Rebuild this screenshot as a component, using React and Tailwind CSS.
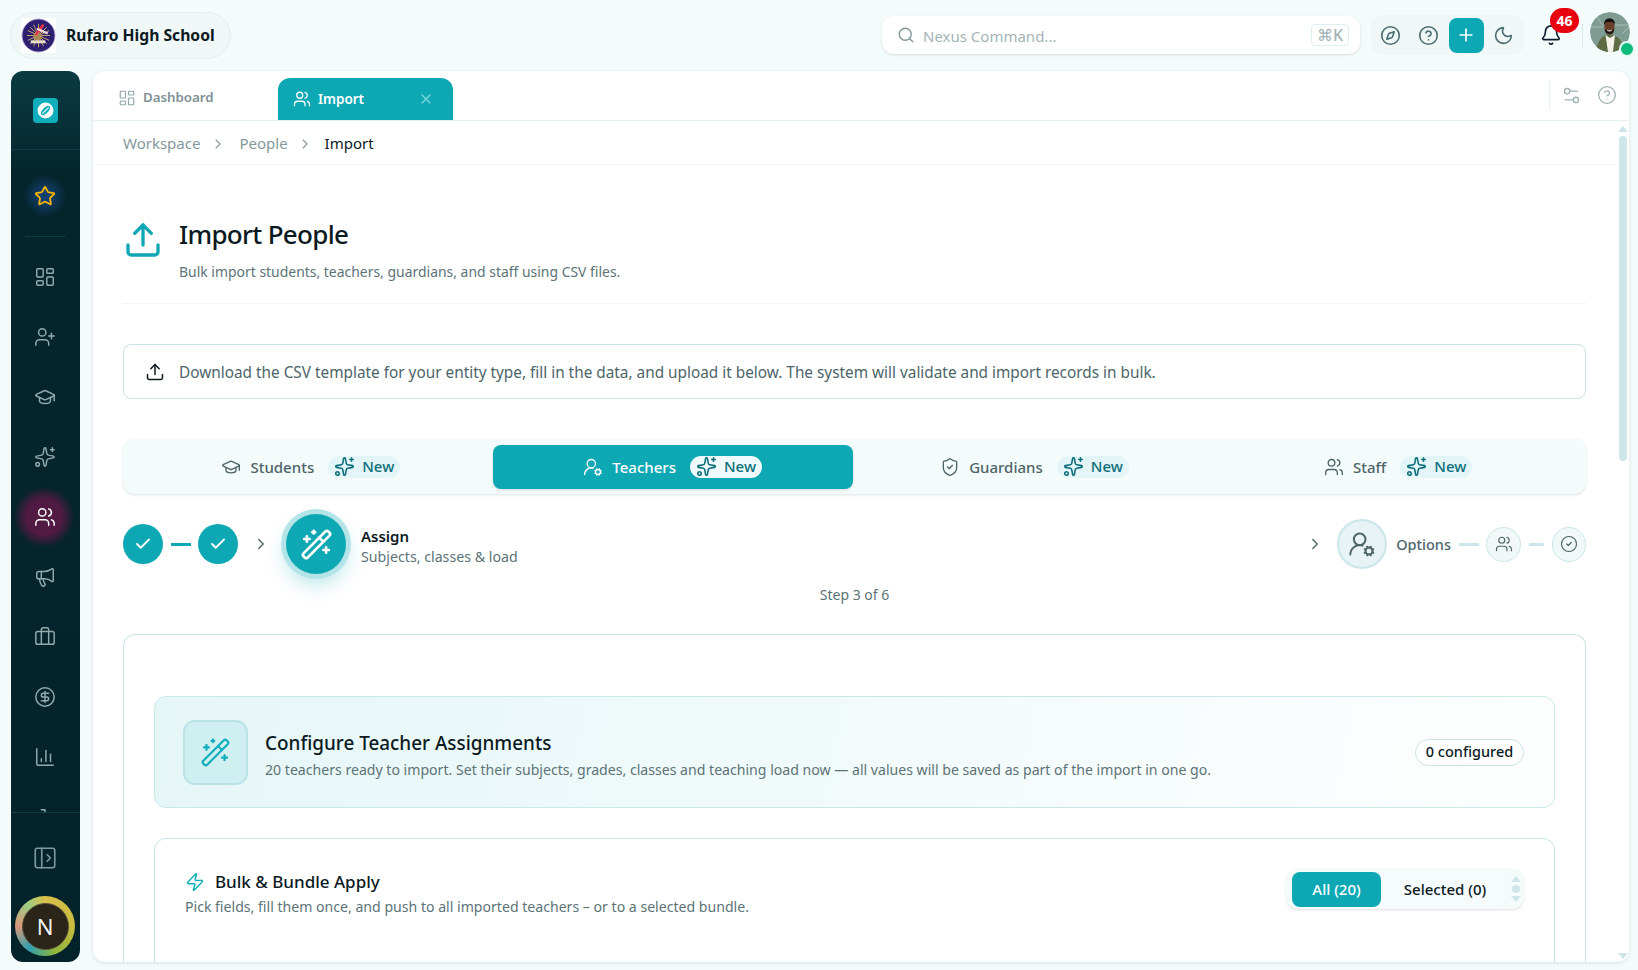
import React from "react";
import {
  LayoutDashboard, Users, X, Star, UserPlus, GraduationCap, Sparkles, Megaphone, Briefcase,
  CircleDollarSign, ChartColumn, PanelLeftOpen, Compass, CircleHelp, Plus, Moon, Bell, Search,
  Upload, Settings2, UserRoundCog, ShieldCheck, WandSparkles, Check, CircleCheck, ChevronRight,
  Zap, Bot,
} from "lucide-react";

function SchoolLogo() {
  return (
    <svg viewBox="0 0 36 36" className="w-[35px] h-[35px] bg-white shrink-0">
      <circle cx="18" cy="18" r="17" fill="#2c1f70" stroke="#b9a9d6" strokeWidth="1" />
      <g stroke="#d8b46a" strokeWidth="0.9">
        <path d="M18 6v24M6 18h24M9.5 9.5l17 17M26.5 9.5l-17 17M13 7l10 22M23 7L13 29M7 13l22 10M29 13L7 23" />
      </g>
      <circle cx="17" cy="19" r="4.5" fill="#a88a5a" />
      <path d="M22 6l2 2-8 10-2-1z" fill="#e8304a" />
      <path d="M17 10l11 5-1 2-11-5z" fill="#f2d9d9" />
      <path d="M10 23h15v3H10z" fill="#e9dfc6" />
    </svg>
  );
}

function Avatar() {
  return (
    <svg viewBox="0 0 40 40" className="w-10 h-10 rounded-full block">
      <circle cx="20" cy="20" r="20" fill="#7f9c92" />
      <path d="M0 15h13M25 13h15M7 5l6 9M32 22l7-7" stroke="#c4d8d0" strokeWidth="0.6" fill="none" />
      <path d="M6 40c1-10 5-15 10-17h7c6 2 10 7 11 17z" fill="#5f6b42" />
      <path d="M15.500 23l2.500 17h5l2-17-5 3z" fill="#f4f1ea" />
      <ellipse cx="19.500" cy="14.500" rx="5" ry="7" fill="#6a3f28" />
      <path d="M14 13c0-5 2.500-6.500 5.500-6.500s5.500 1.500 5.500 6.500c-1-2.500-2.500-3-5.500-3s-4.500.5-5.500 3z" fill="#17100d" />
      <path d="M14.500 16c.5 5 2 6.500 5 6.500s4.500-1.500 5-6.500c-.8 2-2 2.300-5 2.300s-4.200-.3-5-2.300z" fill="#2a1a12" />
      <path d="M16.800 17.500c1.500 1.400 4 1.400 5.400 0-.5 2.500-4.900 2.500-5.400 0z" fill="#fff" />
    </svg>
  );
}

function NavItem({ icon: Icon, active }) {
  return (
    <div className="relative h-[60px] flex items-center justify-center shrink-0 pr-[1px]">
      {active && (
        <div className="absolute left-[3px] top-0 w-[60px] h-[60px] rounded-full bg-[radial-gradient(circle,#501a43_42%,rgba(80,26,67,0)_72%)]" />
      )}
      <Icon className={active ? "relative w-[22px] h-[22px] text-white" : "relative w-[22px] h-[22px] text-[#93aaad]"} strokeWidth={1.6} />
    </div>
  );
}

function Sidebar() {
  return (
    <aside className="w-[69px] h-[891px] shrink-0 rounded-xl flex flex-col bg-[linear-gradient(180deg,#0a3a42_0%,#05252d_12%,#04222a_100%)] overflow-hidden">
      <div className="h-[79px] shrink-0 flex items-center justify-center border-b border-[#0d3c44] pr-[1px]">
        <div className="w-[25px] h-[25px] rounded bg-[#10aebb] flex items-center justify-center">
          <svg viewBox="0 0 24 24" className="w-[19px] h-[19px]">
            <circle cx="12" cy="12" r="10" fill="#fff" />
            <ellipse cx="12" cy="12" rx="7.500" ry="3.600" fill="#10aebb" transform="rotate(-45 12 12)" />
            <path d="M8 16L16 8" stroke="#fff" strokeWidth="1.300" />
          </svg>
        </div>
      </div>
      <div className="h-[86px] shrink-0 flex items-center justify-center pt-[6px] pr-[1px]">
        <div className="w-11 h-11 rounded-full flex items-center justify-center bg-[radial-gradient(circle,#123f6e_15%,rgba(18,63,110,0)_68%)]">
          <Star className="w-[22px] h-[22px] text-[#f6b400]" strokeWidth={2} />
        </div>
      </div>
      <div className="mx-[14px] h-px shrink-0 bg-[#0d3c44]" />
      <div className="flex-1 min-h-0 overflow-hidden pt-[10px]">
        <NavItem icon={LayoutDashboard} />
        <NavItem icon={UserPlus} />
        <NavItem icon={GraduationCap} />
        <NavItem icon={Sparkles} />
        <NavItem icon={Users} active />
        <NavItem icon={Megaphone} />
        <NavItem icon={Briefcase} />
        <NavItem icon={CircleDollarSign} />
        <NavItem icon={ChartColumn} />
        <NavItem icon={Bot} />
      </div>
      <div className="h-[150px] shrink-0 border-t border-[#0d3c44] flex flex-col items-center pr-[1px]">
        <PanelLeftOpen className="mt-[32px] w-[26px] h-[26px] text-[#7d9a9e]" strokeWidth={1.5} />
        <div className="mt-[25px] w-[60px] h-[60px] rounded-full flex items-center justify-center bg-[conic-gradient(#d8c04a_0deg,#c9bb3f_90deg,#8fb53c_160deg,#2f9fb0_215deg,#d99878_270deg,#9ccc82_320deg,#d8c04a_360deg)]">
          <div className="w-[47px] h-[47px] rounded-full bg-[#2a2518] border border-[#55503c] flex items-center justify-center text-[#f2f2f2] text-[22px]">N</div>
        </div>
      </div>
    </aside>
  );
}

function Header() {
  return (
    <header className="h-[71px] shrink-0 flex items-start pl-[10px]">
      <div className="mt-[12px] w-[221px] h-[47px] rounded-full bg-[#eff7f7] border border-[#e1eff0] flex items-center pl-[10px] gap-[10px]">
        <SchoolLogo />
        <span className="text-[15.7px] font-bold text-[#0b1a1f] whitespace-nowrap">Rufaro High School</span>
      </div>
      <div className="ml-[651px] mt-[16px] w-[478px] h-[38px] rounded-xl bg-white shadow-sm flex items-center pl-[15px] pr-[11px]">
        <Search className="w-[18px] h-[18px] text-[#7f9598]" strokeWidth={1.8} />
        <span className="ml-[8px] mt-[2px] text-[15px] text-[#a3b4b7]">Nexus Command...</span>
        <span className="ml-auto w-[38px] h-[22px] rounded border border-[#dff0f1] flex items-center justify-center text-[16px] text-[#a3b4b7] font-medium">⌘K</span>
      </div>
      <div className="ml-[11px] mt-[15px] w-[153px] h-[40px] rounded-xl bg-[#eff7f7] flex items-center pl-[9px] pr-[10px] justify-between">
        <Compass className="w-[21px] h-[21px] text-[#4a6b70]" strokeWidth={1.8} />
        <CircleHelp className="ml-[8px] w-[21px] h-[21px] text-[#4a6b70]" strokeWidth={1.8} />
        <div className="w-[35px] h-[35px] rounded-lg bg-[#0ea8b5] flex items-center justify-center">
          <Plus className="w-[20px] h-[20px] text-white" strokeWidth={2} />
        </div>
        <Moon className="w-[21px] h-[21px] text-[#4a6b70]" strokeWidth={1.8} />
      </div>
      <div className="relative ml-[16px] mt-[24px] w-[22px] h-[22px]">
        <Bell className="w-[22px] h-[22px] text-[#0b1a2b]" strokeWidth={1.8} />
        <span className="absolute left-[10px] top-[-16px] w-[29px] h-[25px] rounded-full bg-[#e8000f] text-white text-[14px] font-bold flex items-center justify-center">46</span>
      </div>
      <div className="ml-[20px] mt-[24px] w-px h-[24px] bg-[#dcecee]" />
      <div className="relative ml-[7px] mt-[12px] w-10 h-10">
        <Avatar />
        <span className="absolute left-[29px] top-[29px] w-[16px] h-[16px] rounded-full bg-[#0dbb7c] border-2 border-[#e6faf4]" />
      </div>
    </header>
  );
}

function TabBar() {
  return (
    <div className="h-[50px] shrink-0 border-b border-[#e4f2f3] flex items-end">
      <div className="w-[185px] h-[42px] pl-[25px] flex items-center gap-[7px] pb-[3px]">
        <LayoutDashboard className="w-[18px] h-[18px] text-[#93a6a9]" strokeWidth={1.6} />
        <span className="text-[13.3px] font-semibold text-[#7d9194]">Dashboard</span>
      </div>
      <div className="w-[175px] h-[42px] rounded-t-xl bg-[#0ea8b5] flex items-center pl-[15px] pr-[19px]">
        <Users className="w-[18px] h-[18px] text-white" strokeWidth={1.7} />
        <span className="ml-[7px] text-[13.5px] font-semibold text-white">Import</span>
        <X className="ml-auto w-[16px] h-[16px] text-[#7ed3da]" strokeWidth={2} />
      </div>
      <div className="ml-auto h-[30px] mb-[10px] w-[80px] border-l border-[#e4f2f3] flex items-center pl-[11px] gap-[15px]">
        <Settings2 className="w-[21px] h-[21px] text-[#a0b2b5]" strokeWidth={1.6} />
        <CircleHelp className="w-[20px] h-[20px] text-[#a0b2b5]" strokeWidth={1.6} />
      </div>
    </div>
  );
}

function Breadcrumb() {
  return (
    <div className="h-[44px] pt-[2px] border-b border-[#eff7f8] flex items-center pl-[30px] text-[15px] text-[#84989b] shrink-0">
      <span>Workspace</span>
      <ChevronRight className="mx-[10px] w-[16px] h-[16px] text-[#84989b]" strokeWidth={1.6} />
      <span className="ml-[3px]">People</span>
      <ChevronRight className="mx-[9px] w-[16px] h-[16px] text-[#84989b]" strokeWidth={1.6} />
      <span className="ml-[3px] text-[#0b1a1f]">Import</span>
    </div>
  );
}

function NewPill({ active }) {
  return (
    <span className={active ? "ml-[14px] h-[22px] pl-[6px] pr-[6px] rounded-full bg-[#eefafb] text-[#0d6f7a] flex items-center gap-[7px] text-[15px] font-medium" : "ml-[14px] h-[22px] pl-[6px] pr-[6px] rounded-full bg-[#e3f5f7] text-[#0d6f7a] flex items-center gap-[7px] text-[15px] font-medium"}>
      <Sparkles className="w-[21px] h-[21px]" strokeWidth={1.8} />
      New
    </span>
  );
}

function EntityTab({ icon: Icon, label, active }) {
  return (
    <div className={active ? "w-[360px] shrink-0 h-[44px] rounded-lg bg-[#0ea8b5] text-white flex items-center justify-center shadow-sm" : "flex-1 h-[44px] text-[#4d6569] flex items-center justify-center"}>
      <Icon className="w-[20px] h-[20px] mr-[9px]" strokeWidth={1.6} />
      <span className="text-[15px] font-medium mt-[1px]">{label}</span>
      <NewPill active={active} />
    </div>
  );
}

function Stepper() {
  return (
    <div className="mt-[15px] h-[70px] flex items-center">
      <div className="w-10 h-10 rounded-full bg-[#0ea8b5] flex items-center justify-center">
        <Check className="w-[18px] h-[18px] text-white" strokeWidth={2.4} />
      </div>
      <div className="ml-[8px] mr-[7px] w-[20px] h-[3px] bg-[#0ea8b5]" />
      <div className="w-10 h-10 rounded-full bg-[#0ea8b5] flex items-center justify-center">
        <Check className="w-[18px] h-[18px] text-white" strokeWidth={2.4} />
      </div>
      <ChevronRight className="ml-[14px] w-[18px] h-[18px] text-[#4d6569]" strokeWidth={1.8} />
      <div className="ml-[16px] w-[60px] h-[60px] rounded-full bg-[#0ea8b5] flex items-center justify-center shadow-[0_0_0_5px_#b5e4e8,0_10px_20px_rgba(14,168,181,0.3)]">
        <WandSparkles className="w-[33px] h-[33px] text-white" strokeWidth={1.9} />
      </div>
      <div className="ml-[15px] mt-[5px]">
        <div className="text-[15px] font-semibold text-[#0b1a1f] leading-[20px]">Assign</div>
        <div className="text-[14.2px] text-[#5c7377] leading-[21px]">Subjects, classes &amp; load</div>
      </div>
      <ChevronRight className="ml-auto w-[18px] h-[18px] text-[#4d6569]" strokeWidth={1.8} />
      <div className="ml-[13px] w-[50px] h-[50px] rounded-full bg-[#e7f3f4] border-2 border-[#cae6ea] flex items-center justify-center">
        <UserRoundCog className="w-[28px] h-[28px] text-[#4d6569]" strokeWidth={1.7} />
      </div>
      <span className="ml-[9px] mt-[1px] text-[14.5px] font-medium text-[#4d6569]">Options</span>
      <div className="ml-[8px] w-[20px] h-[3px] bg-[#cae6ea]" />
      <div className="ml-[7px] w-[35px] h-[35px] rounded-full bg-[#f0f8f8] border border-[#cae6ea] flex items-center justify-center">
        <Users className="w-[18px] h-[18px] text-[#4d6569]" strokeWidth={1.6} />
      </div>
      <div className="ml-[8px] w-[15px] h-[3px] bg-[#cae6ea]" />
      <div className="ml-[8px] w-[34px] h-[35px] rounded-full bg-[#f0f8f8] border border-[#cae6ea] flex items-center justify-center">
        <CircleCheck className="w-[18px] h-[18px] text-[#4d6569]" strokeWidth={1.6} />
      </div>
    </div>
  );
}

function ConfigureBox() {
  return (
    <div className="h-[112px] rounded-xl border border-[#c8e8ea] bg-[linear-gradient(100deg,#e5f6f7_0%,#fdfefe_95%)] flex items-center pl-[28px] pr-[30px] shrink-0">
      <div className="w-[65px] h-[65px] rounded-xl bg-[#d0eff1] border-2 border-[#b8e4e8] flex items-center justify-center">
        <WandSparkles className="w-[31px] h-[31px] text-[#10aebb]" strokeWidth={1.7} />
      </div>
      <div className="ml-[17px] mt-[8px]">
        <div className="text-[18.9px] font-medium text-[#0b1a1f] leading-[27px]">Configure Teacher Assignments</div>
        <div className="text-[14.1px] text-[#5c7377] leading-[25px]">20 teachers ready to import. Set their subjects, grades, classes and teaching load now — all values will be saved as part of the import in one go.</div>
      </div>
      <span className="ml-auto h-[27px] w-[109px] rounded-full bg-white border border-[#c8e3e6] flex items-center justify-center text-[14.5px] font-medium text-[#0b1a1f]">0 configured</span>
    </div>
  );
}

function BulkCard() {
  return (
    <div className="mt-[30px] h-[200px] shrink-0 rounded-t-xl border border-[#c8e3e6] pl-[30px] pr-[30px] flex items-start">
      <div className="mt-[30px]">
        <div className="flex items-center h-[26px]">
          <Zap className="w-[20px] h-[20px] text-[#10aebb]" strokeWidth={1.7} />
          <span className="ml-[10px] text-[17px] font-medium text-[#0b1a1f]">Bulk &amp; Bundle Apply</span>
        </div>
        <div className="mt-[1px] text-[14.1px] text-[#5c7377]">Pick fields, fill them once, and push to all imported teachers – or to a selected bundle.</div>
      </div>
      <div className="ml-auto mt-[30px] w-[238px] h-[40px] rounded-xl bg-[#f4fbfb] shadow-sm flex items-center pl-[6px]">
        <div className="w-[89px] h-[35px] rounded-lg bg-[#0ea8b5] text-white text-[15px] font-medium flex items-center justify-center">All (20)</div>
        <div className="w-[124px] h-[35px] pl-[4px] rounded-r-lg bg-[#f6fbfd] text-[#0b1a1f] text-[15px] font-medium flex items-center justify-center">Selected (0)</div>
        <div className="ml-auto w-[17px] flex flex-col items-center gap-[3px]">
          <span className="w-0 h-0 border-x-[5px] border-x-transparent border-b-[6px] border-b-[#cfe6e9]" />
          <span className="w-[8px] h-[8px] rounded-full bg-[#cfe6e9]" />
          <span className="w-0 h-0 border-x-[5px] border-x-transparent border-t-[6px] border-t-[#cfe6e9]" />
        </div>
      </div>
    </div>
  );
}

function ScrollBar() {
  return (
    <div className="w-[13px] shrink-0 flex flex-col items-center pt-[5px] pb-[3px]">
      <span className="w-0 h-0 border-x-[5px] border-x-transparent border-b-[6px] border-b-[#cfe6e9]" />
      <span className="mt-[4px] w-[8px] h-[325px] rounded bg-[#cfe6e9]" />
      <span className="mt-auto w-0 h-0 border-x-[5px] border-x-transparent border-t-[6px] border-t-[#cfe6e9]" />
    </div>
  );
}

export default function App() {
  return (
    <div className="w-[1638px] h-[970px] overflow-hidden bg-[#f4fbfb] flex flex-col font-['Noto_Sans',sans-serif]">
      <Header />
      <div className="flex pl-[11px]">
        <Sidebar />
        <main className="ml-[13px] w-[1536px] h-[891px] rounded-xl bg-white shadow-[0_1px_4px_rgba(0,60,70,0.12)] flex flex-col overflow-hidden">
          <TabBar />
          <div className="flex flex-1 min-h-0">
            <div className="flex-1 min-w-0 overflow-hidden flex flex-col">
              <Breadcrumb />
              <div className="pl-[30px] pr-[30px] flex flex-col flex-1 min-h-0">
                <div className="mt-[55px] pb-[21px] border-b border-[#eff7f8] flex items-start">
                  <Upload className="w-10 h-10 text-[#10a7b4] shrink-0" strokeWidth={2} />
                  <div className="ml-[16px] -mt-[2px]">
                    <h1 className="text-[26px] font-medium text-[#0b1a1f] leading-[32px] tracking-[-0.7px]">Import People</h1>
                    <p className="mt-[12px] text-[13.95px] text-[#5c7377] leading-[20px]">Bulk import students, teachers, guardians, and staff using CSV files.</p>
                  </div>
                </div>
                <div className="mt-[40px] h-[55px] shrink-0 rounded-lg border border-[#c8e3e6] flex items-center pl-[21px] text-[15.35px] text-[#4d6569]">
                  <Upload className="w-[20px] h-[20px] text-[#0b1a1f]" strokeWidth={1.8} />
                  <span className="ml-[14px] mt-[2px]">Download the CSV template for your entity type, fill in the data, and upload it below. The system will validate and import records in bulk.</span>
                </div>
                <div className="mt-[40px] h-[55px] shrink-0 rounded-xl bg-[#f4fbfb] shadow-[0_1px_3px_rgba(0,60,70,0.15)] flex items-center px-[6px]">
                  <EntityTab icon={GraduationCap} label="Students" />
                  <EntityTab icon={UserRoundCog} label="Teachers" active />
                  <EntityTab icon={ShieldCheck} label="Guardians" />
                  <EntityTab icon={Users} label="Staff" />
                </div>
                <Stepper />
                <div className="mt-[6px] text-center text-[14px] text-[#5c7377] leading-[20px]">Step 3 of 6</div>
                <div className="mt-[29px] flex-1 min-h-0 rounded-t-xl border border-[#c8e3e6] border-b-0 px-[30px] pt-[61px] flex flex-col overflow-hidden">
                  <ConfigureBox />
                  <BulkCard />
                </div>
              </div>
            </div>
            <ScrollBar />
          </div>
        </main>
      </div>
    </div>
  );
}
